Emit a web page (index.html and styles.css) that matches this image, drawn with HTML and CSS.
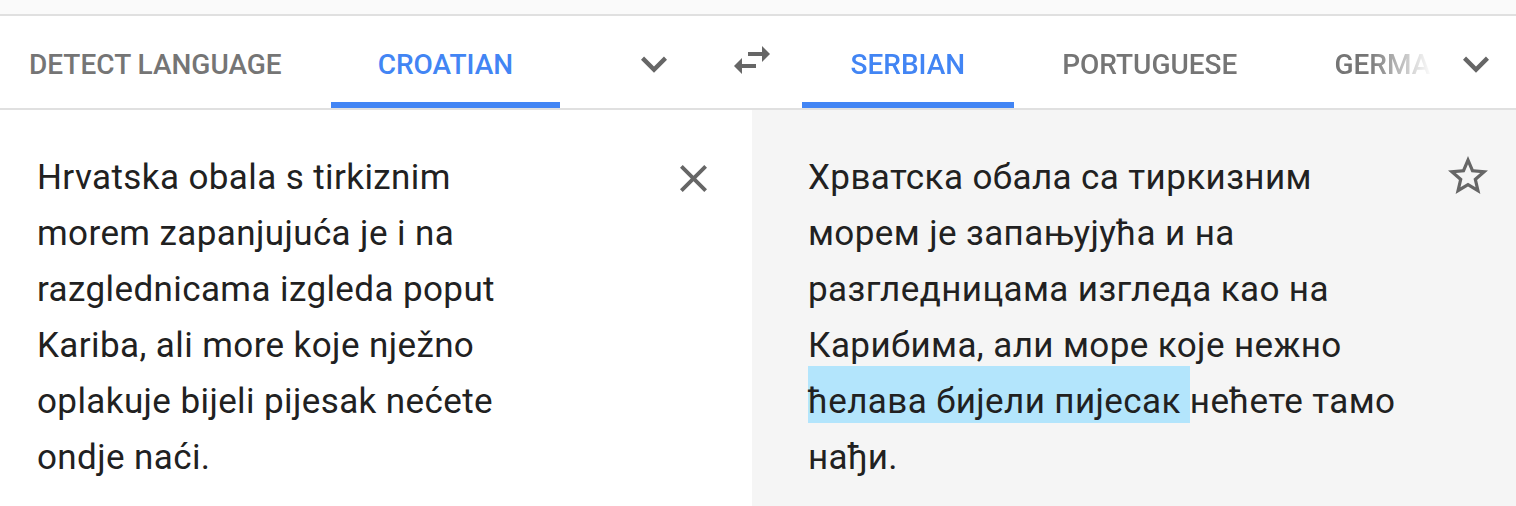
FILE: index.html
```html
<!DOCTYPE html>
<html lang="en">
<head>
<meta charset="utf-8">
<title>Translate</title>
<link rel="stylesheet" href="styles.css">
</head>
<body>
<div class="topstrip"></div>
<header class="langbar">
  <div class="side side-source">
    <div class="tabs">
      <div class="tab tab-first">Detect language</div>
      <div class="tab active">Croatian</div>
    </div>
    <button class="icon-btn chevron" aria-label="More source languages">
      <svg viewBox="0 0 24 24" width="52" height="52"><path d="M16.59 8.59L12 13.17 7.41 8.59 6 10l6 6 6-6z"/></svg>
    </button>
  </div>
  <button class="icon-btn swap" aria-label="Swap languages">
    <svg viewBox="0 0 24 24" width="48" height="48"><path d="M6.99 11L3 15l3.99 4v-3H14v-2H6.99v-3zM21 9l-4-4v3H10v2h7v3l4-4z"/></svg>
  </button>
  <div class="side side-target">
    <div class="tabs tabs-fade">
      <div class="tab active">Serbian</div>
      <div class="tab">Portuguese</div>
      <div class="tab">German</div>
    </div>
    <button class="icon-btn chevron chevron-right" aria-label="More target languages">
      <svg viewBox="0 0 24 24" width="52" height="52"><path d="M16.59 8.59L12 13.17 7.41 8.59 6 10l6 6 6-6z"/></svg>
    </button>
  </div>
</header>
<main class="panels">
  <section class="panel panel-source">
    <p class="text text-source">Hrvatska obala s tirkiznim morem zapanjujuća je i na razglednicama izgleda poput Kariba, ali more koje nježno oplakuje bijeli pijesak nećete ondje naći.</p>
    <button class="icon-btn clear" aria-label="Clear">
      <svg viewBox="5 5 14 14" width="27" height="27"><path d="M19 6.41L17.59 5 12 10.59 6.41 5 5 6.41 10.59 12 5 17.59 6.41 19 12 13.41 17.59 19 19 17.59 13.41 12z"/></svg>
    </button>
  </section>
  <section class="panel panel-target">
    <p class="text text-target">Хрватска обала са тиркизним морем је запањујућа и на разгледницама изгледа као на Карибима, али море које нежно <span class="hl">ћелава бијели пијесак </span>нећете тамо нађи.</p>
    <button class="icon-btn star" aria-label="Save translation">
      <svg viewBox="0 0 24 24" width="48" height="48"><path d="M22 9.24l-7.19-.62L12 2 9.19 8.63 2 9.24l5.46 4.73L5.82 21 12 17.27 18.18 21l-1.63-7.03L22 9.24zM12 15.4l-3.76 2.27 1-4.28-3.32-2.88 4.38-.38L12 6.1l1.71 4.04 4.38.38-3.32 2.88 1 4.28L12 15.4z"/></svg>
    </button>
  </section>
</main>
</body>
</html>
```
FILE: styles.css
```css
* { box-sizing: border-box; }
html, body { margin: 0; padding: 0; }
body {
  width: 1516px;
  height: 506px;
  overflow: hidden;
  background: #fff;
  font-family: Roboto, "Liberation Sans", Arial, sans-serif;
}
.topstrip {
  height: 16px;
  background: #fafafa;
  border-bottom: 2px solid #e0e0e0;
}
.langbar {
  display: flex;
  height: 94px;
  background: #fff;
  border-bottom: 2px solid #e0e0e0;
}
.side {
  display: flex;
  align-items: stretch;
}
.side-source {
  width: 728px;
}
.side-target {
  flex: 1;
  padding-left: 26px;
}
.tabs {
  display: flex;
  overflow: hidden;
  white-space: nowrap;
}
.side-source .tabs { flex: 1; }
.tabs-fade {
  width: 630px;
  -webkit-mask-image: linear-gradient(to right, #000 565px, rgba(0,0,0,0) 630px);
  mask-image: linear-gradient(to right, #000 565px, rgba(0,0,0,0) 630px);
}
.tab {
  display: flex;
  align-items: center;
  padding: 10px 47px 0;
  font-size: 28px;
  font-weight: 500;
  text-transform: uppercase;
  color: #757575;
  border-bottom: 6px solid transparent;
}
.tab-first { padding-left: 29px; padding-right: 49px; }
.tabs-fade .tab { padding-left: 48.5px; padding-right: 48.5px; }
.tab.active {
  color: #4285f4;
  border-bottom-color: #4285f4;
}
.icon-btn {
  border: 0;
  padding: 0;
  margin: 0;
  background: none;
  display: flex;
  align-items: center;
  justify-content: center;
  fill: #666;
}
.chevron {
  width: 52px;
  margin-right: 48px;
  padding-top: 4px;
}
.chevron-right {
  margin-left: auto;
  margin-right: 14px;
}
.swap {
  width: 48px;
  padding-bottom: 4px;
}
.panels {
  display: flex;
  height: 396px;
}
.panel {
  position: relative;
}
.panel-source {
  width: 752px;
  background: #fff;
  padding: 40px 0 0 37px;
}
.panel-target {
  flex: 1;
  background: #f5f5f5;
  padding: 40px 0 0 56px;
}
.text {
  margin: 0;
  font-size: 35px;
  letter-spacing: 0.4px;
  line-height: 56px;
  color: #212121;
}
.text-source { width: 493px; }
.text-target { width: 602px; }
.hl {
  background: #b3e5fc;
  padding: 15px 0 1px;
}
.clear {
  position: absolute;
  left: 680px;
  top: 55px;
}
.star {
  position: absolute;
  left: 692px;
  top: 42px;
}
```
